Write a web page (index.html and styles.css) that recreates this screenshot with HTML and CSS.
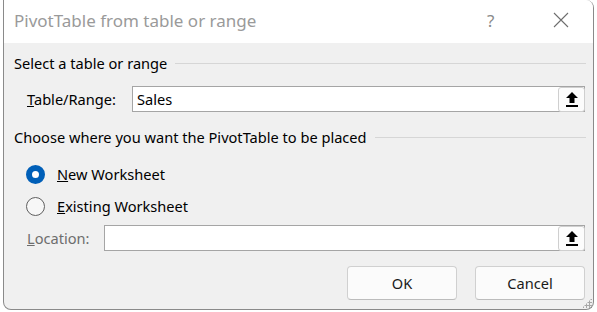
FILE: index.html
```html
<!DOCTYPE html>
<html lang="en">
<head>
    <meta charset="UTF-8">
    <title>PivotTable from table or range</title>
    <link rel="stylesheet" href="styles.css">
</head>
<body>
    <div class="dialog">
        <div class="titlebar">
            <span class="title">PivotTable from table or range</span>
            <span class="help">?</span>
            <span class="close">
                <svg width="16" height="16" viewBox="0 0 16 16"><path d="M1 1 L15 15 M15 1 L1 15" stroke="#6e6e6e" stroke-width="1.1" fill="none"/></svg>
            </span>
        </div>
        <div class="content">
            <div class="group-head"><span>Select a table or range</span><div class="rule"></div></div>
            <div class="field-row">
                <label class="field-label"><u>T</u>able/Range:</label>
                <div class="field range">
                    <span class="value">Sales</span>
                    <button class="picker">
                        <svg width="12" height="15" viewBox="0 0 12 15"><path d="M6 0 L12 6 H8.5 V11 H3.5 V6 H0 Z" fill="#000"/><rect x="0" y="13" width="12" height="2" fill="#000"/></svg>
                    </button>
                </div>
            </div>
            <div class="group-head second"><span>Choose where you want the PivotTable to be placed</span><div class="rule"></div></div>
            <div class="radio-row first">
                <span class="radio checked"></span>
                <span class="radio-label"><u>N</u>ew Worksheet</span>
            </div>
            <div class="radio-row">
                <span class="radio"></span>
                <span class="radio-label"><u>E</u>xisting Worksheet</span>
            </div>
            <div class="field-row location">
                <label class="field-label disabled"><u>L</u>ocation:</label>
                <div class="field loc">
                    <span class="value"></span>
                    <button class="picker">
                        <svg width="12" height="15" viewBox="0 0 12 15"><path d="M6 0 L12 6 H8.5 V11 H3.5 V6 H0 Z" fill="#000"/><rect x="0" y="13" width="12" height="2" fill="#000"/></svg>
                    </button>
                </div>
            </div>
            <div class="buttons">
                <button class="btn">OK</button>
                <button class="btn">Cancel</button>
            </div>
        </div>
        <div class="grip"></div>
    </div>
</body>
</html>
```

FILE: styles.css
```css
* {
    margin: 0;
    padding: 0;
    box-sizing: border-box;
}
body {
    font-family: 'Noto Sans', 'Open Sans', sans-serif;
    background: #ffffff;
    width: 597px;
    height: 312px;
    overflow: hidden;
    color: #000;
}
.dialog {
    position: relative;
    margin-left: 3px;
    width: 591px;
    height: 310px;
    background: #f0f0f0;
    border: 1px solid #8a8a8a;
    border-top: none;
    border-radius: 0 8px 8px 8px;
    overflow: hidden;
}
.titlebar {
    height: 43px;
    background: #fff;
    display: flex;
    align-items: center;
    padding-left: 10px;
}
.title {
    font-size: 17px;
    color: #9a9a9a;
    flex: 1;
    margin-top: -2px;
}
.help {
    font-size: 17px;
    color: #8a8a8a;
    width: 20px;
    margin-right: 46px;
    margin-top: -3px;
}
.close {
    width: 16px;
    height: 16px;
    margin-right: 24px;
    margin-top: -4px;
    display: flex;
}
.content {
    padding: 0 7px 0 10px;
}
.group-head {
    display: flex;
    align-items: center;
    height: 20px;
    margin-top: 10px;
    font-size: 14.6px;
}
.group-head.second {
    margin-top: 15px;
}
.rule {
    flex: 1;
    height: 1px;
    background: #d6d6d6;
    margin-left: 8px;
}
.field-row {
    display: flex;
    align-items: center;
    height: 26px;
    margin-top: 13px;
    padding-left: 13px;
    font-size: 14.6px;
}
.field-label {
    width: 105px;
}
.location .field-label {
    width: 77px;
}
.field-label.disabled {
    color: #6d6d6d;
}
.field {
    flex: 1;
    height: 26px;
    background: #fff;
    border: 1px solid #a5a5a5;
    display: flex;
    align-items: center;
    margin-right: 1px;
}
.value {
    flex: 1;
    padding-left: 4px;
}
.picker {
    width: 27px;
    height: 25px;
    margin-right: -1px;
    border: 1px solid #cfcfcf;
    border-radius: 3px;
    background: #fcfcfc;
    display: flex;
    align-items: center;
    justify-content: center;
}
.radio-row {
    display: flex;
    align-items: center;
    height: 24px;
    margin-top: 8px;
    padding-left: 12px;
    font-size: 14.6px;
}
.radio-row.first {
    margin-top: 15px;
}
.radio {
    width: 19px;
    height: 19px;
    border-radius: 50%;
    border: 1px solid #5f5f5f;
    background: #f7f7f7;
    margin-right: 12px;
}
.radio.checked {
    border: 6px solid #005fb8;
    background: #fff;
}
.location {
    margin-top: 7px;
}
.buttons {
    display: flex;
    justify-content: flex-end;
    gap: 18px;
    margin-top: 15px;
    padding-right: 1px;
}
.btn {
    width: 110px;
    height: 34px;
    font-family: 'Noto Sans', 'Open Sans', sans-serif;
    font-size: 14.6px;
    background: #fbfbfb;
    border: 1px solid #d0d0d0;
    border-bottom-color: #bcbcbc;
    border-radius: 4px;
    color: #1a1a1a;
}
.grip {
    position: absolute;
    right: 1px;
    bottom: 1px;
    width: 10px;
    height: 10px;
    background:
        radial-gradient(circle, #a8a8a8 1px, transparent 1.2px) 0 0 / 3px 3px;
    clip-path: polygon(100% 0, 100% 100%, 0 100%);
}
```
